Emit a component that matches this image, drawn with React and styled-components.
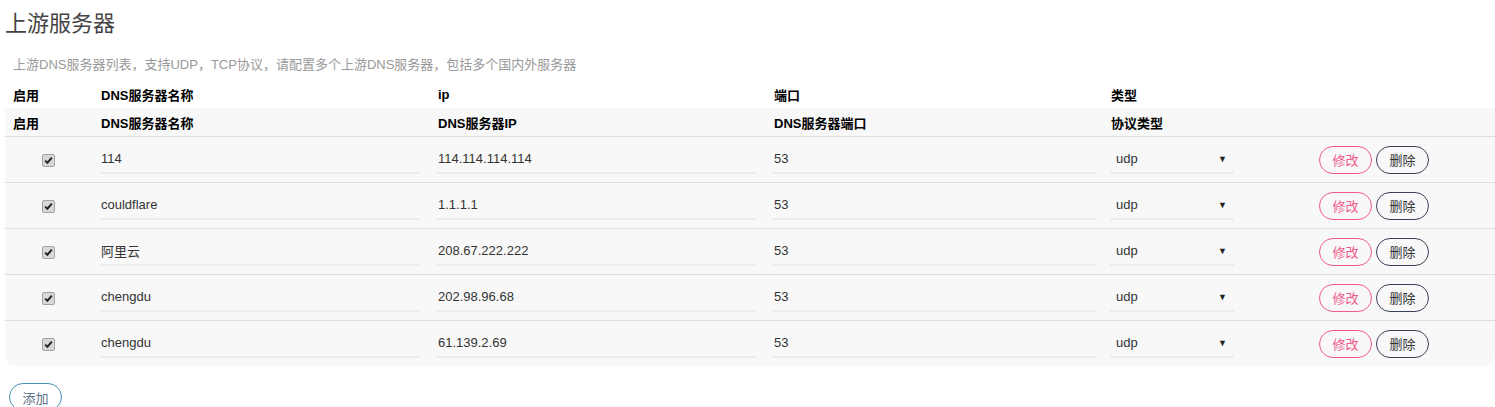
import React from "react";
import styled, { createGlobalStyle } from "styled-components";

const GlobalStyle = createGlobalStyle`
    body {
        margin: 0;
        background: #ffffff;
        font-family: "Liberation Sans", "Noto Sans CJK SC", sans-serif;
        color: #333333;
    }
`

const Page = styled.div`
    padding-left: 5px;
    width: 1490px;
`

const Title = styled.div`
    font-size: 22px;
    line-height: 48px;
    color: #444444;
`

const Tip = styled.div`
    margin-top: 7px;
    padding-left: 8px;
    font-size: 13px;
    line-height: 20px;
    color: #999999;
`

const Grid = styled.div`
    display: grid;
    grid-template-columns: 88px 337px 336px 337px 1fr;
    align-items: center;
`

const HeadRow = styled(Grid)`
    height: ${p => p.tall ? 28 : 27}px;
    margin-top: ${p => p.tall ? 0 : 6}px;
    background: ${p => p.tall ? "#f8f8f8" : "transparent"};
`

const HeadCell = styled.div`
    padding-left: 8px;
    font-size: 13px;
    font-weight: bold;
    color: #000000;
`

const Body = styled.div`
    background: #f8f8f8;
    border-radius: 0 0 10px 10px;
`

const Row = styled(Grid)`
    height: 45px;
    border-top: 1px solid #dddddd;
`

const Cell = styled.div`
    padding: ${p => p.center ? "0 2px 0 0" : "0 0 0 7px"};
    display: flex;
    align-items: center;
    justify-content: ${p => p.center ? "center" : "flex-start"};
`

const Check = styled.span`
    display: inline-flex;
    align-items: center;
    justify-content: center;
    width: 11px;
    height: 11px;
    margin-top: 2px;
    border: 1px solid #a3a3a3;
    border-radius: 2px;
    background: #d8d8d8;
`

const Field = styled.input`
    box-sizing: border-box;
    width: ${p => p.w}px;
    height: 28px;
    padding: 0 1px;
    border: none;
    border-bottom: 2px solid #ececec;
    background: transparent;
    font-family: inherit;
    font-size: 13px;
    color: #333333;
    outline: none;
`

const SelectBox = styled.div`
    box-sizing: border-box;
    width: 124px;
    height: 28px;
    padding: 0 6px;
    display: flex;
    align-items: center;
    justify-content: space-between;
    border-bottom: 2px solid #ececec;
    font-size: 13px;
    color: #333333;
`

const Arrow = styled.span`
    font-size: 9px;
    color: #222222;
    margin-right: 1px;
`

const Actions = styled.div`
    display: flex;
    gap: 4px;
    padding-left: 85px;
`

const Button = styled.button`
    box-sizing: border-box;
    width: 53px;
    height: 28px;
    border: 1px solid ${p => p.color};
    border-radius: 14px;
    background: transparent;
    color: ${p => p.text || p.color};
    font-family: inherit;
    font-size: 13px;
    padding: 0;
    cursor: pointer;
`

const AddButton = styled(Button)`
    margin: 17px 0 0 4px;
`

const servers = [
    { name: "114", ip: "114.114.114.114", port: "53", type: "udp" },
    { name: "couldflare", ip: "1.1.1.1", port: "53", type: "udp" },
    { name: "阿里云", ip: "208.67.222.222", port: "53", type: "udp" },
    { name: "chengdu", ip: "202.98.96.68", port: "53", type: "udp" },
    { name: "chengdu", ip: "61.139.2.69", port: "53", type: "udp" },
]

const CheckMark = () => (
    <Check>
        <svg width="9" height="9" viewBox="0 0 9 9">
            <path d="M1.2 4.6 L3.4 6.8 L7.8 1.6" fill="none" stroke="#222" strokeWidth="2" />
        </svg>
    </Check>
)

const App = () => {
    return (
        <Page>
            <GlobalStyle />
            <Title>上游服务器</Title>
            <Tip>上游DNS服务器列表，支持UDP，TCP协议，请配置多个上游DNS服务器，包括多个国内外服务器</Tip>
            <HeadRow>
                <HeadCell>启用</HeadCell>
                <HeadCell>DNS服务器名称</HeadCell>
                <HeadCell>ip</HeadCell>
                <HeadCell>端口</HeadCell>
                <HeadCell>类型</HeadCell>
            </HeadRow>
            <HeadRow tall>
                <HeadCell>启用</HeadCell>
                <HeadCell>DNS服务器名称</HeadCell>
                <HeadCell>DNS服务器IP</HeadCell>
                <HeadCell>DNS服务器端口</HeadCell>
                <HeadCell>协议类型</HeadCell>
            </HeadRow>
            <Body>
                {servers.map((s, i) =>
                    <Row key={i}>
                        <Cell center><CheckMark /></Cell>
                        <Cell><Field w={320} defaultValue={s.name} /></Cell>
                        <Cell><Field w={320} defaultValue={s.ip} /></Cell>
                        <Cell><Field w={322} defaultValue={s.port} /></Cell>
                        <Cell>
                            <SelectBox>
                                <span>{s.type}</span>
                                <Arrow>▼</Arrow>
                            </SelectBox>
                            <Actions>
                                <Button color="#ee5a8a">修改</Button>
                                <Button color="#3a4257" text="#333">删除</Button>
                            </Actions>
                        </Cell>
                    </Row>
                )}
            </Body>
            <AddButton color="#4a8fae" text="#5d7389">添加</AddButton>
        </Page>
    )
}

export default App
